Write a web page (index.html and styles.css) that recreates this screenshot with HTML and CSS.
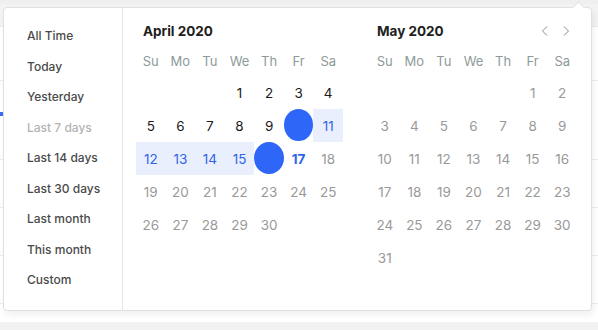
FILE: index.html
```html
<!DOCTYPE html>
<html lang="en">
<head>
<meta charset="UTF-8">
<title>Date range picker</title>
<link rel="stylesheet" href="styles.css">
</head>
<body>
<div class="page">
    <div class="page-top"></div>
    <div class="page-row page-row-first"></div>
    <div class="page-row page-row-tall"></div>
    <div class="page-row"><span class="page-mark"></span></div>
    <div class="page-row"></div>
    <div class="page-row"></div>
    <div class="page-row"></div>
    <div class="page-bottom"></div>
</div>

<div class="picker">
    <span class="picker-arrow"></span>
    <ul class="ranges">
        <li>All Time</li>
        <li>Today</li>
        <li>Yesterday</li>
        <li class="disabled">Last 7 days</li>
        <li>Last 14 days</li>
        <li>Last 30 days</li>
        <li>Last month</li>
        <li>This month</li>
        <li>Custom</li>
    </ul>

    <div class="calendars">
        <div class="month">
            <div class="month-head">
                <span class="month-title">April 2020</span>
            </div>
            <div class="days april" id="april"></div>
        </div>
        <div class="month">
            <div class="month-head">
                <span class="month-title">May 2020</span>
                <span class="nav">
                    <svg width="10" height="12" viewBox="0 0 10 12"><path d="M7 1.5 L2.5 6 L7 10.5" fill="none" stroke="#8a8a8a" stroke-width="1"/></svg>
                    <svg width="10" height="12" viewBox="0 0 10 12"><path d="M3 1.5 L7.5 6 L3 10.5" fill="none" stroke="#8a8a8a" stroke-width="1"/></svg>
                </span>
            </div>
            <div class="days may" id="may"></div>
        </div>
    </div>
</div>

<script>
    const weekdays = ['Su', 'Mo', 'Tu', 'We', 'Th', 'Fr', 'Sa'];

    function buildMonth(el, firstDay, count, classFor) {
        weekdays.forEach(w => {
            const d = document.createElement('span');
            d.className = 'weekday';
            d.textContent = w;
            el.appendChild(d);
        });
        for (let i = 0; i < firstDay; i++) {
            el.appendChild(document.createElement('span'));
        }
        for (let day = 1; day <= count; day++) {
            const d = document.createElement('span');
            d.className = 'day ' + classFor(day);
            d.textContent = day;
            el.appendChild(d);
        }
    }

    buildMonth(document.getElementById('april'), 3, 30, day => {
        if (day === 10 || day === 16) return 'edge';
        if (day > 10 && day < 16) return 'in-range';
        if (day === 17) return 'today';
        if (day > 17) return 'future';
        return 'past';
    });

    buildMonth(document.getElementById('may'), 5, 31, () => 'future');
</script>
</body>
</html>
```

FILE: styles.css
```css
body {
    margin: 0;
    width: 598px;
    height: 330px;
    overflow: hidden;
    background: #fff;
    font-family: Inter, "Noto Sans", sans-serif;
    position: relative;
}
.page-top {
    height: 4px;
    background: #efefef;
}
.page-row {
    height: 47px;
    border-bottom: 1px solid #ececec;
}
.page-row-first {
    height: 22px;
    background: #f3f3f3;
}
.page-row-tall {
    height: 53px;
}
.page-mark {
    display: block;
    width: 3px;
    height: 4px;
    margin-top: 31px;
    background: #3b6cf6;
}
.page-bottom {
    position: absolute;
    left: 0;
    right: 0;
    top: 322px;
    bottom: 0;
    background: #f2f2f2;
}

.picker {
    position: absolute;
    left: 3px;
    top: 7px;
    width: 587px;
    height: 302px;
    display: flex;
    background: #fff;
    border: 1px solid #e0e0e0;
    border-radius: 4px;
    box-shadow: 2px 4px 6px rgba(0,0,0,0.06);
}
.picker-arrow {
    position: absolute;
    top: -5px;
    right: 8px;
    width: 8px;
    height: 8px;
    background: #fff;
    border-left: 1px solid #e0e0e0;
    border-top: 1px solid #e0e0e0;
    transform: rotate(45deg);
}

.ranges {
    list-style: none;
    margin: 0;
    padding: 13px 0 0 23px;
    width: 95px;
    border-right: 1px solid #e6e6e6;
}
.ranges li {
    height: 30.5px;
    line-height: 30.5px;
    font-size: 12px;
    font-weight: 500;
    color: #4a4a4a;
    white-space: nowrap;
}
.ranges li.disabled {
    color: #b3b3b3;
}

.calendars {
    display: flex;
    gap: 27px;
    padding: 8px 0 0 13px;
}
.month {
    width: 207px;
}
.month-head {
    height: 30px;
    display: flex;
    align-items: center;
    justify-content: space-between;
    padding: 0 6px 0 7px;
}
.month-title {
    font-size: 13.5px;
    font-weight: 700;
    color: #1e1e1e;
}
.nav {
    display: flex;
    gap: 11px;
}
.days {
    display: grid;
    grid-template-columns: repeat(7, 1fr);
    grid-template-rows: 30px;
    grid-auto-rows: 33px;
    font-size: 13.5px;
}
.weekday {
    line-height: 30px;
    text-align: center;
    font-size: 13px;
    color: #8d9a99;
}
.day {
    display: flex;
    align-items: center;
    justify-content: center;
}
.day.past {
    color: #1a1a1a;
}
.day.future {
    color: #999;
}
.day.in-range {
    background: #e9effd;
    color: #2f64e8;
}
.day.today {
    color: #2f64e8;
    font-weight: 700;
}
.day.edge {
    color: #2e67f8;
    position: relative;
}
.day.edge::before {
    content: "";
    position: absolute;
    left: 0;
    right: 0;
    top: 0;
    bottom: 1px;
    border-radius: 50%;
    background: #2e67f8;
}
```
